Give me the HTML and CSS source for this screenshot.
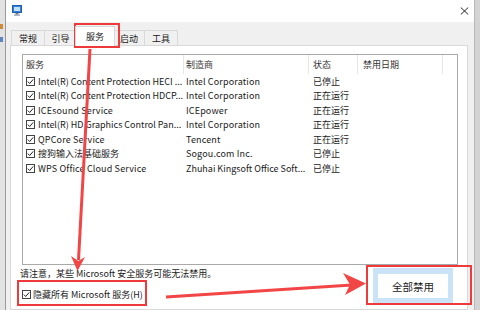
FILE: index.html
```html
<!DOCTYPE html>
<html lang="zh-CN">
<head>
<meta charset="utf-8">
<title>系统配置</title>
<link rel="stylesheet" href="styles.css">
</head>
<body>
<div class="desk-left"><span class="dico a"></span><span class="dico b"></span></div>
<div class="window">
  <div class="titlebar">
    <svg class="appicon" width="10" height="11" viewBox="0 0 10 11"><rect x="0.5" y="0.5" width="9" height="7" fill="#3b7fd4" stroke="#1f5fae"/><rect x="2" y="2" width="6" height="4" fill="#bfe0fb"/><rect x="3.5" y="8" width="3" height="1.5" fill="#6a7a90"/><rect x="2" y="9.5" width="6" height="1.2" fill="#8897aa"/></svg>
    <svg class="close" width="9" height="8" viewBox="0 0 9 8"><path d="M0.8 0.5 L8.2 7.5 M8.2 0.5 L0.8 7.5" stroke="#222" stroke-width="1" fill="none"/></svg>
  </div>
  <div class="client">
    <div class="tabs">
      <div class="tab t1">常规</div>
      <div class="tab t2">引导</div>
      <div class="tab active">服务</div>
      <div class="tab t4">启动</div>
      <div class="tab t5">工具</div>
    </div>
    <div class="panel">
      <div class="list">
        <div class="row head">
          <div class="c c1">服务</div>
          <div class="c c2">制造商</div>
          <div class="c c3">状态</div>
          <div class="c c4">禁用日期</div>
          <div class="c c5"></div>
        </div>
        <div class="row">
          <div class="c c1"><svg class="cb" width="9" height="9" viewBox="0 0 9 9"><rect x="0.5" y="0.5" width="8" height="8" fill="#fff" stroke="#444"/><polyline points="1.8,4.6 3.7,6.5 7.2,2.4" fill="none" stroke="#222" stroke-width="1"/></svg><span>Intel(R) Content Protection HECI ...</span></div>
          <div class="c c2 lat">Intel Corporation</div>
          <div class="c c3">已停止</div>
          <div class="c c4"></div>
          <div class="c c5"></div>
        </div>
        <div class="row">
          <div class="c c1"><svg class="cb" width="9" height="9" viewBox="0 0 9 9"><rect x="0.5" y="0.5" width="8" height="8" fill="#fff" stroke="#444"/><polyline points="1.8,4.6 3.7,6.5 7.2,2.4" fill="none" stroke="#222" stroke-width="1"/></svg><span>Intel(R) Content Protection HDCP...</span></div>
          <div class="c c2 lat">Intel Corporation</div>
          <div class="c c3">正在运行</div>
          <div class="c c4"></div>
          <div class="c c5"></div>
        </div>
        <div class="row">
          <div class="c c1"><svg class="cb" width="9" height="9" viewBox="0 0 9 9"><rect x="0.5" y="0.5" width="8" height="8" fill="#fff" stroke="#444"/><polyline points="1.8,4.6 3.7,6.5 7.2,2.4" fill="none" stroke="#222" stroke-width="1"/></svg><span class="lat">ICEsound Service</span></div>
          <div class="c c2 lat">ICEpower</div>
          <div class="c c3">正在运行</div>
          <div class="c c4"></div>
          <div class="c c5"></div>
        </div>
        <div class="row">
          <div class="c c1"><svg class="cb" width="9" height="9" viewBox="0 0 9 9"><rect x="0.5" y="0.5" width="8" height="8" fill="#fff" stroke="#444"/><polyline points="1.8,4.6 3.7,6.5 7.2,2.4" fill="none" stroke="#222" stroke-width="1"/></svg><span>Intel(R) HD Graphics Control Pan...</span></div>
          <div class="c c2 lat">Intel Corporation</div>
          <div class="c c3">正在运行</div>
          <div class="c c4"></div>
          <div class="c c5"></div>
        </div>
        <div class="row">
          <div class="c c1"><svg class="cb" width="9" height="9" viewBox="0 0 9 9"><rect x="0.5" y="0.5" width="8" height="8" fill="#fff" stroke="#444"/><polyline points="1.8,4.6 3.7,6.5 7.2,2.4" fill="none" stroke="#222" stroke-width="1"/></svg><span class="lat">QPCore Service</span></div>
          <div class="c c2 lat">Tencent</div>
          <div class="c c3">正在运行</div>
          <div class="c c4"></div>
          <div class="c c5"></div>
        </div>
        <div class="row">
          <div class="c c1"><svg class="cb" width="9" height="9" viewBox="0 0 9 9"><rect x="0.5" y="0.5" width="8" height="8" fill="#fff" stroke="#444"/><polyline points="1.8,4.6 3.7,6.5 7.2,2.4" fill="none" stroke="#222" stroke-width="1"/></svg><span>搜狗输入法基础服务</span></div>
          <div class="c c2 lat">Sogou.com Inc.</div>
          <div class="c c3">已停止</div>
          <div class="c c4"></div>
          <div class="c c5"></div>
        </div>
        <div class="row">
          <div class="c c1"><svg class="cb" width="9" height="9" viewBox="0 0 9 9"><rect x="0.5" y="0.5" width="8" height="8" fill="#fff" stroke="#444"/><polyline points="1.8,4.6 3.7,6.5 7.2,2.4" fill="none" stroke="#222" stroke-width="1"/></svg><span class="lat">WPS Office Cloud Service</span></div>
          <div class="c c2">Zhuhai Kingsoft Office Soft...</div>
          <div class="c c3">已停止</div>
          <div class="c c4"></div>
          <div class="c c5"></div>
        </div>
      </div>
      <div class="bottom">
        <div class="left">
          <div class="note">请注意，某些 Microsoft 安全服务可能无法禁用。</div>
          <div class="hide"><svg class="cb" width="9" height="9" viewBox="0 0 9 9"><rect x="0.5" y="0.5" width="8" height="8" fill="#fff" stroke="#444"/><polyline points="1.8,4.6 3.7,6.5 7.2,2.4" fill="none" stroke="#222" stroke-width="1"/></svg><span>隐藏所有 Microsoft 服务(H)</span></div>
        </div>
        <button class="btn">全部禁用</button>
      </div>
    </div>
  </div>
</div>
<div class="desk-right"></div>
<svg class="annot" width="480" height="310" viewBox="0 0 480 310">
  <g fill="none" stroke="#ee3a3a" stroke-width="2">
    <rect x="75" y="24" width="44" height="23"/>
    <rect x="18" y="281" width="128" height="24"/>
    <rect x="367" y="266" width="104" height="38"/>
  </g>
  <line x1="90" y1="49" x2="78.5" y2="260" stroke="#f24545" stroke-width="3"/>
  <polygon points="71,256 78.3,261 85,257 77.5,271" fill="#f24545"/>
  <line x1="166" y1="297" x2="352" y2="285" stroke="#f24545" stroke-width="3"/>
  <polygon points="343,273 366,283.5 345,295 350,284.5" fill="#f24545"/>
</svg>
</body>
</html>
```
FILE: styles.css
```css
* { box-sizing: border-box; }
html, body { margin: 0; padding: 0; }
body {
  width: 480px;
  height: 310px;
  overflow: hidden;
  display: flex;
  position: relative;
  background: #d9d9d9;
  font-family: "Noto Sans CJK SC", "Noto Sans", sans-serif;
  font-size: 9px;
  color: #1a1a1a;
}
.desk-left {
  width: 5px;
  flex: none;
  background: #e2e2e2;
  display: flex;
  flex-direction: column;
  padding-top: 24px;
  gap: 8px;
}
.dico { display: block; width: 3px; height: 5px; }
.dico.a { background: #d08a3a; }
.dico.b { background: #5b86c2; }
.desk-right {
  width: 6px;
  flex: none;
  background: #d4d4d4;
  border-left: 1px solid #b8b8b8;
}
.window {
  flex: 1;
  display: flex;
  flex-direction: column;
  border-left: 1px solid #9a9a9a;
  background: #f0f0f0;
  min-width: 0;
}
.titlebar {
  height: 22px;
  flex: none;
  background: #fff;
  display: flex;
  align-items: flex-start;
  justify-content: space-between;
  padding: 5px 5px 0 6px;
}
.appicon { display: block; }
.close { display: block; margin-top: 2px; }
.client {
  flex: 1;
  display: flex;
  flex-direction: column;
  padding: 0 6px 0 4px;
}
.tabs {
  height: 23px;
  flex: none;
  display: flex;
  align-items: flex-end;
  padding-left: 1px;
}
.tab {
  height: 15px;
  border: 1px solid #d9d9d9;
  border-bottom: none;
  background: #f0f0f0;
  display: flex;
  align-items: center;
  justify-content: center;
  line-height: 1;
  color: #1a1a1a;
  margin-left: -1px;
}
.t1 { width: 34px; margin-left: 0; }
.t2 { width: 33px; }
.active {
  width: 40px;
  height: 20px;
  margin-bottom: -1px;
  margin-left: -2px;
  margin-right: -2px;
  background: #fff;
  position: relative;
  z-index: 1;
  padding-bottom: 1px;
}
.t4 { width: 32px; margin-left: 0; }
.t5 { width: 34px; }
.panel {
  flex: 1;
  background: #fff;
  border: 1px solid #d9d9d9;
  padding: 8px 9px 0 11px;
  display: flex;
  flex-direction: column;
}
.list {
  height: 211px;
  flex: none;
  border: 1px solid #a9a9a9;
  background: #fff;
}
.row {
  display: flex;
  height: 14.5px;
  align-items: center;
  white-space: nowrap;
}
.row.head { height: 19px; align-items: stretch; color: #333; }
.c { overflow: hidden; display: flex; align-items: center; }
.c1 { width: 161px; padding-left: 3px; }
.c2 { width: 125px; padding-left: 2px; }
.c3 { width: 49px; padding-left: 4px; }
.c4 { width: 85px; padding-left: 5px; }
.c5 { flex: 1; }
.lat { letter-spacing: 0.15px; }
.head .c1, .head .c2, .head .c3, .head .c4 { border-right: 1px solid #e6e6e6; }
.cb { display: block; flex: none; margin-right: 3px; }
.bottom {
  display: flex;
  justify-content: space-between;
  align-items: flex-start;
  padding-top: 3px;
}
.left { display: flex; flex-direction: column; padding-left: 0; }
.note { line-height: 11px; margin-top: 0; margin-left: -2px; }
.hide {
  display: flex;
  align-items: center;
  margin-top: 10px;
  line-height: 11px;
}
.hide .cb { margin-right: 2px; }
.btn {
  width: 80px;
  height: 35px;
  margin-right: 5px;
  background: #fff;
  border: 5px solid #cbe3f7;
  border-top-width: 6px;
  font-family: "Noto Sans CJK SC", sans-serif;
  font-size: 10.5px;
  color: #1a1a1a;
  padding: 0;
}
.annot {
  position: absolute;
  left: 0;
  top: 0;
  pointer-events: none;
}
```
